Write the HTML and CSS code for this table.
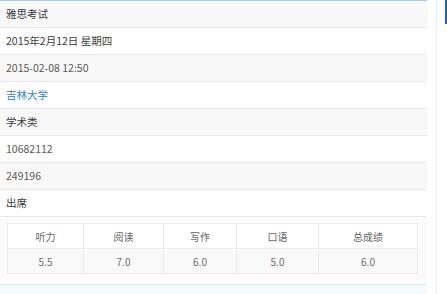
FILE: index.html
```html
<!DOCTYPE html>
<html>
<head>
<meta charset="utf-8">
<link rel="stylesheet" href="styles.css">
</head>
<body>
<div class="page">
  <div class="main">
    <div class="row alt">雅思考试</div>
    <div class="row">2015年2月12日 星期四</div>
    <div class="row alt light">2015-02-08 12:50</div>
    <div class="row link">吉林大学</div>
    <div class="row alt">学术类</div>
    <div class="row light">10682112</div>
    <div class="row alt light">249196</div>
    <div class="row">出席</div>
    <div class="scores">
      <table class="score-table">
        <colgroup>
          <col class="c1"><col class="c2"><col class="c3"><col class="c4"><col class="c5">
        </colgroup>
        <tr class="head"><td>听力</td><td>阅读</td><td>写作</td><td>口语</td><td>总成绩</td></tr>
        <tr class="data"><td>5.5</td><td>7.0</td><td>6.0</td><td>5.0</td><td>6.0</td></tr>
      </table>
    </div>
    <div class="next"></div>
  </div>
  <div class="side">
    <div class="side-tab"></div>
  </div>
</div>
</body>
</html>
```
FILE: styles.css
```css
html, body {
  margin: 0;
  padding: 0;
  background: #ffffff;
  font-family: "Noto Sans CJK SC", "Liberation Sans", sans-serif;
}
.page {
  display: flex;
  width: 447px;
  height: 294px;
  overflow: hidden;
}
.main {
  width: 427px;
  border-top: 1px solid #a9c9ee;
  display: flex;
  flex-direction: column;
}
.row {
  height: 26px;
  line-height: 26px;
  border-bottom: 1px solid #e9e9e9;
  padding-left: 6px;
  font-size: 10.5px;
  color: #3c3c3c;
  background: #ffffff;
}
.row.alt {
  background: #f8f8f8;
}
.row.light {
  color: #5a5a5a;
}
.row.link {
  color: #2f86c8;
}
.scores {
  padding: 6px 10px 10px 7px;
  background: #fbfbfb;
}
.score-table {
  border-collapse: collapse;
  width: 410px;
  table-layout: fixed;
  background: #ffffff;
}
.score-table col.c1 { width: 76px; }
.score-table col.c2 { width: 80px; }
.score-table col.c3 { width: 73px; }
.score-table col.c4 { width: 82px; }
.score-table col.c5 { width: 99px; }
.score-table td {
  border: 1px solid #ebebeb;
  text-align: center;
  font-size: 10px;
  color: #666666;
  height: 24px;
  padding: 0;
}
.score-table tr.data td {
  background: #f9f9f9;
  color: #6e6e6e;
}
.next {
  flex: 1;
  border-top: 1px solid #d8ecf6;
  background: #f6fbfe;
}
.side {
  width: 20px;
  display: flex;
  justify-content: flex-end;
  position: relative;
}
.side::before {
  content: "";
  position: absolute;
  left: 9px;
  top: 0;
  bottom: 0;
  width: 1px;
  background: #ececec;
}
.side-tab {
  width: 2px;
  height: 24px;
  background: #1f5fc0;
}
```
